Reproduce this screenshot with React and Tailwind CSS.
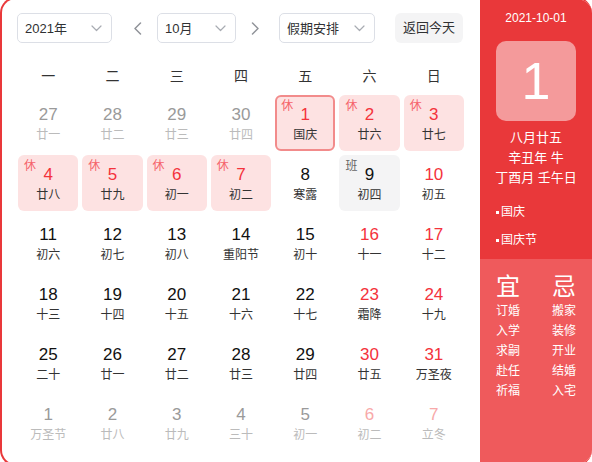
import React from "react";

const FONT = "font-['Liberation_Sans','Noto_Sans_CJK_SC',sans-serif]";

const rows = [
  [
    { d: 27, l: "廿一", t: "o" },
    { d: 28, l: "廿二", t: "o" },
    { d: 29, l: "廿三", t: "o" },
    { d: 30, l: "廿四", t: "o" },
    { d: 1, l: "国庆", r: 1, tag: "休", sel: 1 },
    { d: 2, l: "廿六", r: 1, tag: "休" },
    { d: 3, l: "廿七", r: 1, tag: "休" },
  ],
  [
    { d: 4, l: "廿八", r: 1, tag: "休" },
    { d: 5, l: "廿九", r: 1, tag: "休" },
    { d: 6, l: "初一", r: 1, tag: "休" },
    { d: 7, l: "初二", r: 1, tag: "休" },
    { d: 8, l: "寒露" },
    { d: 9, l: "初四", tag: "班" },
    { d: 10, l: "初五", r: 1 },
  ],
  [
    { d: 11, l: "初六" },
    { d: 12, l: "初七" },
    { d: 13, l: "初八" },
    { d: 14, l: "重阳节" },
    { d: 15, l: "初十" },
    { d: 16, l: "十一", r: 1 },
    { d: 17, l: "十二", r: 1 },
  ],
  [
    { d: 18, l: "十三" },
    { d: 19, l: "十四" },
    { d: 20, l: "十五" },
    { d: 21, l: "十六" },
    { d: 22, l: "十七" },
    { d: 23, l: "霜降", r: 1 },
    { d: 24, l: "十九", r: 1 },
  ],
  [
    { d: 25, l: "二十" },
    { d: 26, l: "廿一" },
    { d: 27, l: "廿二" },
    { d: 28, l: "廿三" },
    { d: 29, l: "廿四" },
    { d: 30, l: "廿五", r: 1 },
    { d: 31, l: "万圣夜", r: 1 },
  ],
  [
    { d: 1, l: "万圣节", t: "o" },
    { d: 2, l: "廿八", t: "o" },
    { d: 3, l: "廿九", t: "o" },
    { d: 4, l: "三十", t: "o" },
    { d: 5, l: "初一", t: "o" },
    { d: 6, l: "初二", t: "o", r: 1 },
    { d: 7, l: "立冬", t: "o", r: 1 },
  ],
];

function Down() {
  return (
    <svg width="11" height="7" viewBox="0 0 11 7" fill="none">
      <path d="M1 1l4.5 4.5L10 1" stroke="#a8abb2" strokeWidth="1.2" strokeLinecap="round" strokeLinejoin="round" />
    </svg>
  );
}

function Chev({ dir }) {
  return (
    <svg width="9" height="13" viewBox="0 0 9 13" fill="none">
      <path
        d={dir === "l" ? "M7.5 1L2 6.5 7.5 12" : "M1.5 1L7 6.5 1.5 12"}
        stroke="#909399"
        strokeWidth="1.5"
        strokeLinecap="round"
        strokeLinejoin="round"
      />
    </svg>
  );
}

function Select({ w, text }) {
  return (
    <div className={`${w} h-[30px] border border-[#dcdfe6] rounded-[5px] flex items-center justify-between pl-[7px] pr-[9px] bg-white`}>
      <span className="text-[13px] text-[#303133] leading-none">{text}</span>
      <Down />
    </div>
  );
}

function Cell({ c }) {
  const other = c.t === "o";
  let bg = "";
  if (c.tag === "休") bg = "bg-[#fde2e2]";
  if (c.tag === "班") bg = "bg-[#f4f4f5]";
  const border = c.sel ? "border-2 border-[#f28b8b]" : "border-2 border-transparent";
  let num = "text-[#111]";
  if (c.r) num = "text-[#f4333c]";
  if (other) num = c.r ? "text-[#f8a9a9]" : "text-[#9a9a9a]";
  const lun = other ? "text-[#bbbbbb]" : "text-[#333]";
  return (
    <div className={`relative h-[56px] rounded-[6px] ${bg} ${border} flex flex-col items-center pt-[8px]`}>
      {c.tag && (
        <span
          className={`absolute left-[4px] top-[1px] text-[12px] leading-[16px] ${
            c.tag === "休" ? "text-[#f5626a]" : "text-[#666]"
          }`}
        >
          {c.tag}
        </span>
      )}
      <span className={`text-[17px] leading-[20px] ${num}`}>{c.d}</span>
      <span className={`mt-[2px] text-[12px] leading-[16px] ${lun}`}>{c.l}</span>
    </div>
  );
}

export default function App() {
  return (
    <div className={`${FONT} w-[592px] h-[469px] -mt-[3px] bg-white`}>
      <div className="w-full h-full flex rounded-2xl border-l-2 border-t-2 border-b-2 border-[#e9383a] overflow-hidden">
        <div className="w-[478px] pl-[16px] pt-[14px]">
          <div className="flex items-center h-[30px] -ml-px">
            <Select w="w-[95px]" text="2021年" />
            <div className="w-[45px] flex justify-center pl-[5px]">
              <Chev dir="l" />
            </div>
            <Select w="w-[79px]" text="10月" />
            <div className="w-[43px] flex justify-center pr-[4px]">
              <Chev dir="r" />
            </div>
            <Select w="w-[96px]" text="假期安排" />
            <button className="ml-[20px] w-[68px] h-[30px] rounded-[6px] bg-[#f4f4f5] text-[13px] text-[#303133]">
              返回今天
            </button>
          </div>
          <div className="mt-[23px] w-[446px] grid grid-cols-7 gap-x-[4px] h-[20px]">
            {["一", "二", "三", "四", "五", "六", "日"].map((w) => (
              <div key={w} className="text-center text-[14px] leading-[20px] text-[#333]">
                {w}
              </div>
            ))}
          </div>
          <div className="mt-[9px] w-[446px] grid grid-cols-7 gap-[4px]">
            {rows.flat().map((c, i) => (
              <Cell key={i} c={c} />
            ))}
          </div>
        </div>
        <div className="flex-1 flex flex-col text-white">
          <div className="bg-[#e9383a] h-[260px] flex flex-col items-center pt-[11px]">
            <div className="text-[12px] leading-[16px]">2021-10-01</div>
            <div className="mt-[15px] w-[80px] h-[80px] rounded-[10px] bg-[#f49a9b] flex items-center justify-center">
              <span className="text-[52px] leading-none">1</span>
            </div>
            <div className="mt-[7px] text-[13px] leading-[20px] text-center">
              <div>八月廿五</div>
              <div>辛丑年 牛</div>
              <div>丁酉月 壬午日</div>
            </div>
            <div className="self-stretch pl-[16px] mt-[16px] flex flex-col gap-[12px] text-[12px] leading-[16px]">
              <div className="flex items-center">
                <span className="w-[3px] h-[3px] bg-white mr-[2px]" />
                国庆
              </div>
              <div className="flex items-center">
                <span className="w-[3px] h-[3px] bg-white mr-[2px]" />
                国庆节
              </div>
            </div>
          </div>
          <div className="flex-1 bg-[#ef5a5c] flex justify-center gap-[32px] pt-[14px]">
            <div className="flex flex-col items-center">
              <div className="text-[24px] leading-[28px]">宜</div>
              {["订婚", "入学", "求嗣", "赴任", "祈福"].map((t) => (
                <div key={t} className="text-[12px] leading-[20px]">
                  {t}
                </div>
              ))}
            </div>
            <div className="flex flex-col items-center">
              <div className="text-[24px] leading-[28px]">忌</div>
              {["搬家", "装修", "开业", "结婚", "入宅"].map((t) => (
                <div key={t} className="text-[12px] leading-[20px]">
                  {t}
                </div>
              ))}
            </div>
          </div>
        </div>
      </div>
    </div>
  );
}
